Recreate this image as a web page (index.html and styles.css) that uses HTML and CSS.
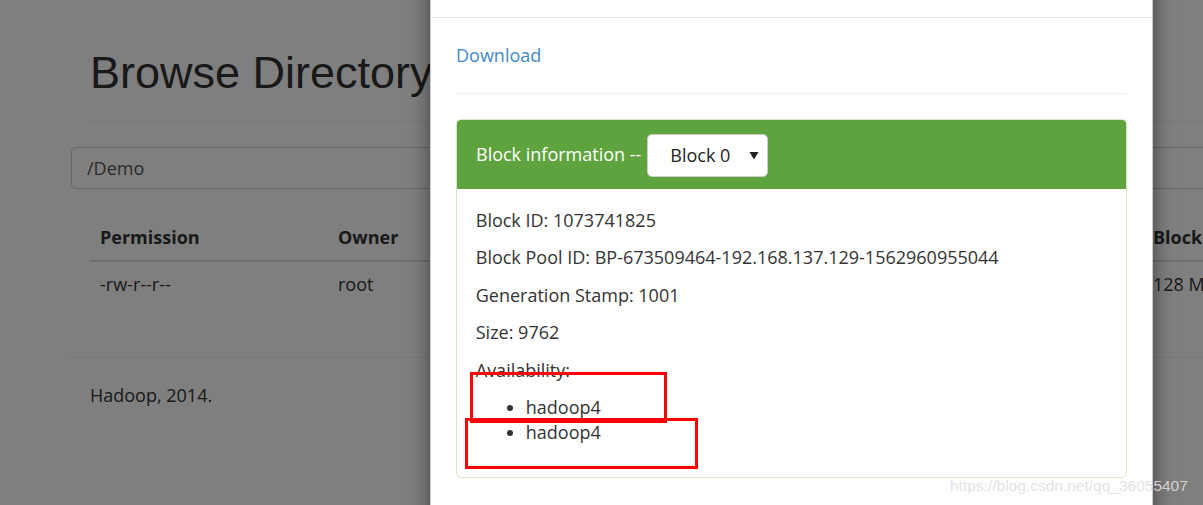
FILE: index.html
```html
<!DOCTYPE html>
<html>
<head>
<meta charset="utf-8">
<link rel="stylesheet" href="styles.css">
</head>
<body>
<div class="page">
  <div class="page-header"><h1>Browse Directory</h1></div>
  <div class="path-input">/Demo</div>
  <table class="listing">
    <colgroup>
      <col style="width:238px"><col style="width:150px"><col style="width:150px"><col style="width:120px"><col style="width:240px"><col style="width:155px"><col style="width:130px"><col style="width:150px">
    </colgroup>
    <thead>
      <tr><th>Permission</th><th>Owner</th><th>Group</th><th>Size</th><th>Last Modified</th><th>Replication</th><th>Block Size</th><th>Name</th></tr>
    </thead>
    <tbody>
      <tr><td>-rw-r--r--</td><td>root</td><td>supergroup</td><td>9.54 KB</td><td>2019/7/13</td><td>1</td><td>128 MB</td><td>a.txt</td></tr>
    </tbody>
  </table>
  <div class="footer">
    <p>Hadoop, 2014.</p>
  </div>
</div>

<div class="backdrop"></div>

<div class="modal">
  <div class="modal-header">
    <span class="close">&times;</span>
    <h4>File information - a.txt</h4>
  </div>
  <div class="modal-body">
    <a class="download" href="#">Download</a>
    <hr class="sep">
    <div class="panel">
      <div class="panel-heading">
        <span>Block information --</span>
        <div class="select">
          <span>Block 0</span>
          <svg class="caret" width="10" height="9" viewBox="0 0 10 9"><path d="M0.5 1 L9.5 1 L5 8.5 Z" fill="#222"/></svg>
        </div>
      </div>
      <div class="panel-body">
        <p>Block ID: 1073741825</p>
        <p>Block Pool ID: BP-673509464-192.168.137.129-1562960955044</p>
        <p>Generation Stamp: 1001</p>
        <p>Size: 9762</p>
        <p>Availability:</p>
        <ul>
          <li>hadoop4</li>
          <li>hadoop4</li>
        </ul>
      </div>
    </div>
  </div>
</div>

<div class="mark mark-one"></div>
<div class="mark mark-two"></div>

<div class="watermark">https://blog.csdn.net/qq_36055407</div>
</body>
</html>
```
FILE: styles.css
```css
html, body {
  margin: 0;
  padding: 0;
}
body {
  width: 1203px;
  height: 505px;
  overflow: hidden;
  position: relative;
  background: #fff;
  color: #333;
  font-family: "Open Sans", "Noto Sans", sans-serif;
  font-size: 18px;
  line-height: 25px;
}
.page {
  padding-left: 71px;
  width: 1180px;
}
.page-header {
  margin-left: 19px;
  padding-top: 48px;
  padding-bottom: 11px;
  border-bottom: 1px solid #eee;
  margin-bottom: 25px;
}
.page-header h1 {
  margin: 0 0 12.5px 0;
  font-family: "Liberation Sans", Arial, sans-serif;
  font-weight: 400;
  font-size: 45px;
  line-height: 49.5px;
}
.path-input {
  box-sizing: border-box;
  height: 42px;
  border: 1px solid #ccc;
  border-radius: 5px;
  padding: 0 15px;
  line-height: 40px;
  color: #555;
}
.listing {
  margin: 26px 0 50px 19px;
  border-collapse: collapse;
  table-layout: fixed;
  width: 1333px;
}
.listing th, .listing td {
  text-align: left;
  padding: 10px;
  line-height: 25px;
  white-space: nowrap;
  overflow: hidden;
}
.listing th {
  font-weight: 700;
  border-bottom: 2px solid #ddd;
}
.footer {
  border-top: 1px solid #eee;
  padding-top: 25px;
  padding-left: 19px;
}
.footer p {
  margin: 0;
}

.backdrop {
  position: absolute;
  inset: 0;
  background: rgba(0, 0, 0, 0.5);
}

.modal {
  position: absolute;
  left: 430px;
  top: -47px;
  width: 723px;
  box-sizing: border-box;
  background: #fff;
  border: 1px solid rgba(0, 0, 0, 0.2);
  box-shadow: 0 6px 19px rgba(0, 0, 0, 0.5);
}
.modal-header {
  padding: 18.75px;
  border-bottom: 1px solid #e5e5e5;
}
.modal-header h4 {
  margin: 0;
  font-size: 22px;
  font-weight: 500;
  line-height: 25px;
}
.close {
  float: right;
  font-size: 26px;
  font-weight: 700;
  opacity: 0.2;
}
.modal-body {
  padding: 25px 25px 40px 25px;
}
.download {
  display: block;
  color: #428bca;
  text-decoration: none;
}
.sep {
  margin: 25px 0;
  border: 0;
  border-top: 1px solid #eee;
}
.panel {
  border: 1px solid #d6e9c6;
  border-radius: 5px;
}
.panel-heading {
  display: flex;
  align-items: center;
  background: #5fa33e;
  color: #fff;
  padding: 12.5px 19px;
  border-radius: 4px 4px 0 0;
}
.select {
  display: flex;
  align-items: center;
  justify-content: space-between;
  box-sizing: border-box;
  margin-left: 6px;
  width: 121px;
  height: 42.5px;
  background: #fff;
  color: #222;
  border: 1px solid #ccc;
  border-radius: 5px;
  padding: 0 8px 0 22px;
  margin-top: 2px;
}
.caret {
  display: block;
}
.panel-body {
  padding: 18.75px;
}
.panel-body p {
  margin: 0 0 12.5px 0;
}
.panel-body ul {
  margin: 0 0 12.5px 0;
  padding-left: 50px;
}

.mark {
  position: absolute;
  border: 3px solid #ff0000;
  box-sizing: border-box;
}
.mark-one {
  left: 470px;
  top: 372px;
  width: 197px;
  height: 51px;
}
.mark-two {
  left: 465px;
  top: 418px;
  width: 233px;
  height: 51px;
}

.watermark {
  position: absolute;
  left: 950px;
  top: 475px;
  font-family: "Liberation Sans", Arial, sans-serif;
  font-size: 15.5px;
  line-height: 22px;
  color: rgba(222, 222, 222, 0.9);
  white-space: nowrap;
}
```
